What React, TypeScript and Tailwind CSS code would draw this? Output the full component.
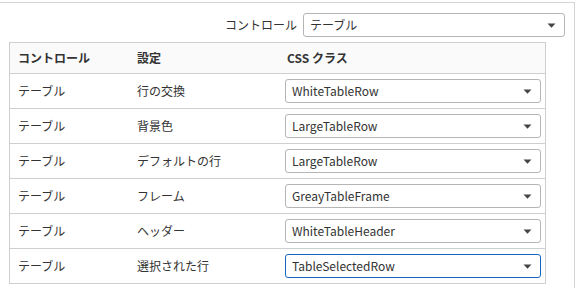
import React from "react";

const rows = [
  ["テーブル", "行の交換", "WhiteTableRow", false],
  ["テーブル", "背景色", "LargeTableRow", false],
  ["テーブル", "デフォルトの行", "LargeTableRow", false],
  ["テーブル", "フレーム", "GreayTableFrame", false],
  ["テーブル", "ヘッダー", "WhiteTableHeader", false],
  ["テーブル", "選択された行", "TableSelectedRow", true],
] as const;

function Arrow() {
  return (
    <svg width="9" height="5" viewBox="0 0 9 5" className="shrink-0">
      <path d="M0.5 0.5 L8.5 0.5 L4.5 4.8 Z" fill="#444" />
    </svg>
  );
}

function Select({ value, active, className }: { value: string; active?: boolean; className?: string }) {
  return (
    <div
      className={`flex items-center justify-between rounded-[3px] border bg-white pl-[6px] pr-[8px] ${
        active ? "border-[#1565c0]" : "border-[#b5b5b5]"
      } ${className ?? ""}`}
    >
      <span className="leading-none">{value}</span>
      <Arrow />
    </div>
  );
}

export default function App() {
  return (
    <div
      className="h-[288px] w-[577px] overflow-hidden bg-white text-[12px] text-[#333]"
      style={{ fontFamily: '"Noto Sans CJK JP", "Noto Sans", sans-serif' }}
    >
      <div className="mt-[2px] mr-[2px] h-[300px] border-t border-r border-[#d4d4d4]">
        <div className="flex items-center justify-end pt-[10px] pr-[9px]">
          <span className="mr-[6px]">コントロール</span>
          <Select value="テーブル" className="h-[24px] w-[262px]" />
        </div>
        <div className="ml-[9px] mt-[5px] w-[537px] border border-[#cfcfcf]">
          <div className="flex h-[30px] items-center bg-[#fafafa] font-bold">
            <div className="w-[119px] pl-[8px]">コントロール</div>
            <div className="w-[148px] pl-[8px]">設定</div>
            <div className="pl-[10px]">CSS クラス</div>
          </div>
          {rows.map(([a, b, c, active], i) => (
            <div key={i} className="flex h-[35px] items-center border-t border-[#cfcfcf]">
              <div className="w-[119px] pl-[8px]">{a}</div>
              <div className="w-[148px] pl-[8px]">{b}</div>
              <div className="pl-[8px]">
                <Select value={c} active={active} className="h-[24px] w-[256px]" />
              </div>
            </div>
          ))}
        </div>
      </div>
    </div>
  );
}
